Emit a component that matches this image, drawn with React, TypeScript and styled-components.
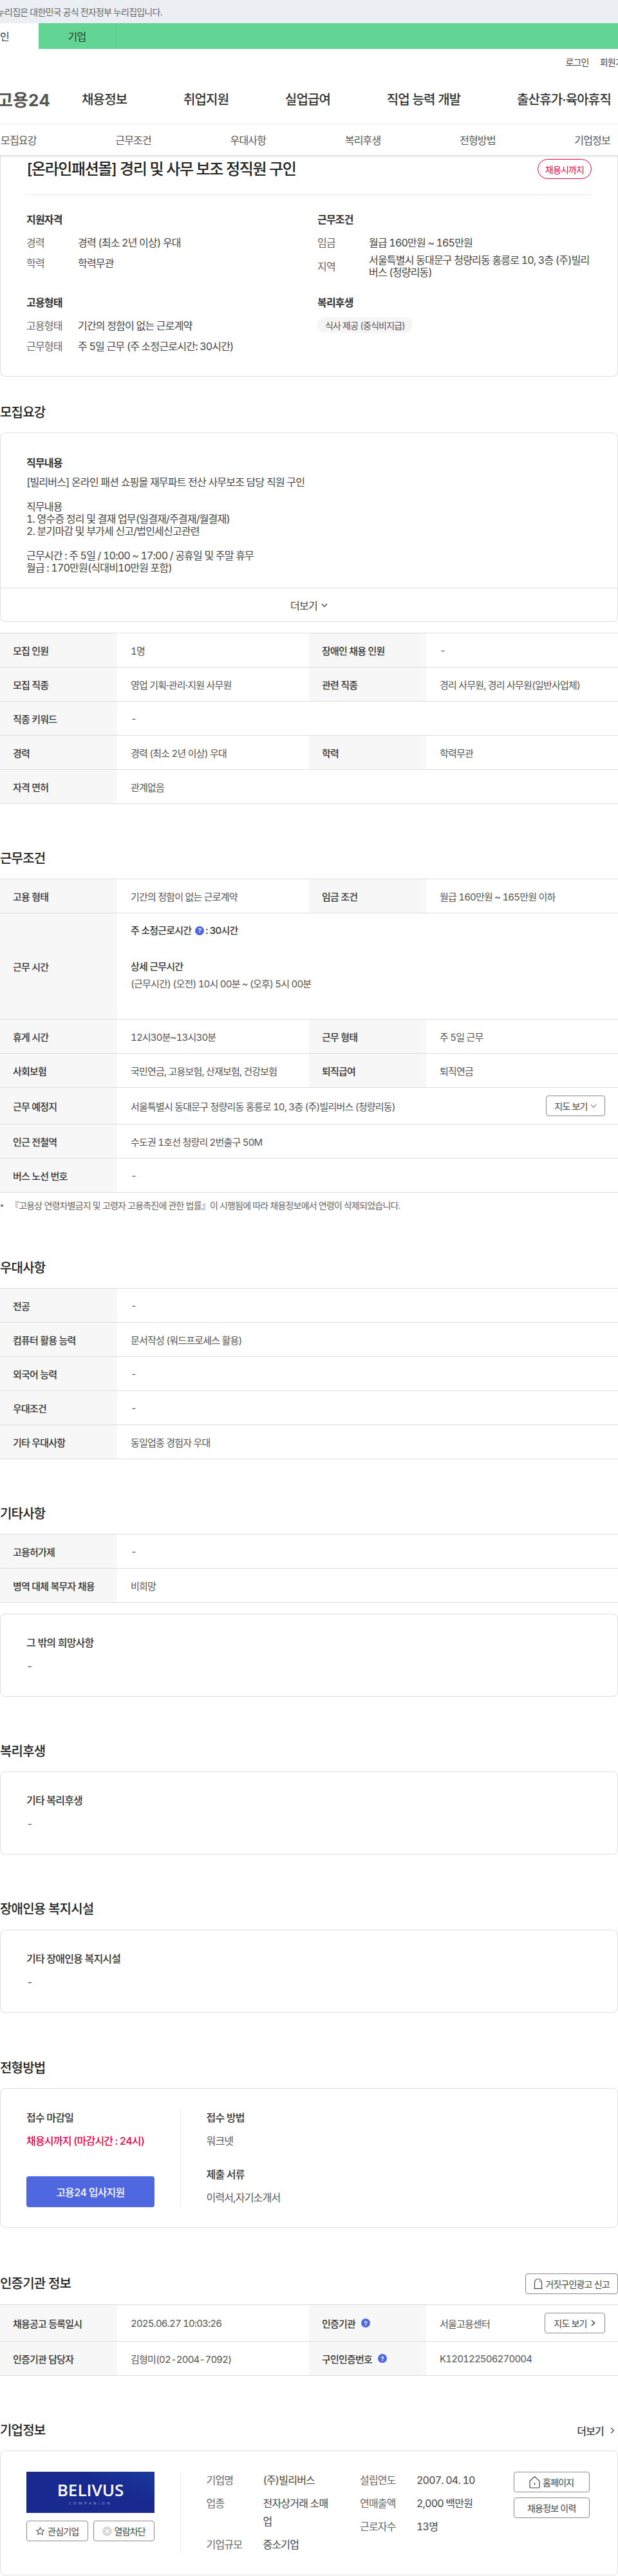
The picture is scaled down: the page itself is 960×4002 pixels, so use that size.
import React from "react";
import styled, { createGlobalStyle } from "styled-components";

const Global = createGlobalStyle`
  html, body { margin: 0; padding: 0; background: #fff; }
  body {
    font-family: Inter, "Noto Sans CJK KR", "Noto Sans", sans-serif;
    font-variant-numeric: tabular-nums;
    color: #333;
    letter-spacing: -0.05em;
    overflow-x: hidden;
  }
  * { box-sizing: border-box; }
`;

const Page = styled.div`
  width: 960px;
  overflow: hidden;
`;

const GovBar = styled.div`
  height: 36px;
  background: #ebeff4;
  display: flex;
  align-items: center;
  font-size: 14px;
  color: #666;
  white-space: nowrap;
`;
const GovText = styled.span`
  margin-left: -20px;
`;

const Audience = styled.div`
  height: 40px;
  background: #62d594;
  display: flex;
`;
const AudienceTab = styled.div<{ $active?: boolean }>`
  flex: none;
  width: 120px;
  margin-left: ${(p) => (p.$active ? "-60px" : "0")};
  background: ${(p) => (p.$active ? "#fff" : "transparent")};
  border-right: ${(p) => (p.$active ? "none" : "1px solid #5bcb8b")};
  display: flex;
  align-items: center;
  justify-content: center;
  font-size: 16px;
  color: #333;
`;

const Util = styled.div`
  height: 40px;
  display: flex;
  justify-content: flex-end;
  align-items: center;
  gap: 17px;
  margin-right: -20px;
  font-size: 14px;
  color: #444;
  white-space: nowrap;
`;

const MainNav = styled.div`
  height: 77px;
  display: flex;
  align-items: center;
  border-bottom: 1px solid #ececec;
  gap: 87.5px;
  font-size: 20px;
  font-weight: 500;
  color: #333;
  white-space: nowrap;
  padding-bottom: 1px;
`;
const Logo = styled.div`
  flex: none;
  width: 79px;
  margin-left: -4px;
  margin-right: -35.5px;
  font-size: 26px;
  font-weight: 700;
  color: #555;
  letter-spacing: 0;
`;

const Tabs = styled.div`
  position: relative;
  z-index: 2;
  height: 48px;
  display: flex;
  justify-content: space-between;
  align-items: center;
  padding: 0 12px 0 1px;
  background: #fff;
  font-size: 16px;
  color: #555;
  box-shadow: 0 2px 3px rgba(0, 0, 0, 0.14);
`;

const Card = styled.div<{ $noTop?: boolean }>`
  width: 960px;
  border: 1px solid #dedede;
  border-top: ${(p) => (p.$noTop ? "none" : "1px solid #dedede")};
  border-radius: ${(p) => (p.$noTop ? "0 0 8px 8px" : "8px")};
  background: #fff;
`;

const TitleRow = styled.div`
  margin: 0 40px;
  padding: 6px 0 24px;
  display: flex;
  justify-content: space-between;
  align-items: center;
  border-bottom: 1px solid #eaeaea;
`;
const Title = styled.h1`
  margin: 0;
  font-size: 24px;
  font-weight: 500;
  line-height: 31px;
  letter-spacing: -1.4px;
  color: #222;
`;
const Badge = styled.span`
  height: 31px;
  width: 84px;
  border: 1px solid #e6004d;
  border-radius: 16px;
  display: flex;
  align-items: center;
  justify-content: center;
  font-size: 14px;
  color: #e6004d;
`;

const Summary = styled.div`
  padding: 26px 40px 34px;
  display: grid;
  grid-template-columns: 452px 1fr;
  row-gap: 25px;
`;
const SumBlock = styled.div``;
const SumTitle = styled.div`
  font-size: 16px;
  line-height: 24px;
  font-weight: 600;
  color: #333;
  margin-bottom: 12px;
`;
const SumRow = styled.div<{ $mt?: number }>`
  display: grid;
  grid-template-columns: 80px 1fr;
  align-items: center;
  min-height: 24px;
  margin-top: ${(p) => p.$mt ?? 8}px;
  font-size: 16px;
  line-height: 19px;
`;
const SumLabel = styled.span`
  color: #666;
`;
const SumValue = styled.span`
  color: #444;
`;
const Pill = styled.span`
  display: inline-flex;
  align-items: center;
  height: 24px;
  padding: 0 12px;
  margin-top: -1px;
  border-radius: 12px;
  background: #f5f5f5;
  font-size: 14px;
  color: #555;
`;

const SectionHead = styled.div<{ $top?: number; $bottom?: number }>`
  margin-top: ${(p) => p.$top ?? 70}px;
  margin-bottom: ${(p) => p.$bottom ?? 16}px;
  min-height: 30px;
  display: flex;
  align-items: center;
  justify-content: space-between;
`;
const H2 = styled.h2`
  margin: 0;
  font-size: 20px;
  line-height: 30px;
  font-weight: 500;
  color: #222;
`;
const MoreLink = styled.span`
  display: flex;
  align-items: center;
  gap: 8px;
  margin-right: 4px;
  font-size: 16px;
  font-weight: 500;
  color: #444;
`;

const JobBody = styled.div`
  padding: 34px 40px 21px;
`;
const BoldHead = styled.div`
  font-size: 16px;
  line-height: 24px;
  font-weight: 600;
  color: #333;
`;
const Desc = styled.div`
  margin-top: 9px;
  font-size: 16px;
  line-height: 19px;
  color: #444;
  white-space: pre-line;
`;
const MoreBar = styled.div`
  height: 52px;
  border-top: 1px solid #dedede;
  display: flex;
  align-items: center;
  justify-content: center;
  gap: 6px;
  font-size: 16px;
  color: #444;
`;

const Table = styled.div<{ $top?: number }>`
  margin-top: ${(p) => p.$top ?? 0}px;
  border-top: 1px solid #dedede;
`;
const Row = styled.div<{ $h?: number }>`
  display: grid;
  grid-template-columns: 182px 298px 182px 1fr;
  min-height: ${(p) => p.$h ?? 53}px;
  border-bottom: 1px solid #dedede;
  font-size: 15px;
`;
const Label = styled.div`
  background: #f7f7f7;
  padding-left: 20px;
  display: flex;
  align-items: center;
  gap: 5px;
  font-weight: 500;
  color: #333;
`;
const Value = styled.div<{ $span?: boolean }>`
  grid-column: ${(p) => (p.$span ? "2 / -1" : "auto")};
  padding: 0 20px 0 21px;
  display: flex;
  align-items: center;
  justify-content: space-between;
  color: #555;
`;
const HoursCell = styled.div`
  grid-column: 2 / -1;
  padding: 13px 21px 0;
  color: #555;
  line-height: 27px;
`;
const HoursStrong = styled.div<{ $mt?: number }>`
  display: flex;
  align-items: center;
  gap: 2px;
  margin-top: ${(p) => p.$mt ?? 0}px;
  font-weight: 500;
  color: #333;
`;
const HoursText = styled.div``;

const Help = styled.span`
  flex: none;
  width: 14px;
  height: 14px;
  border-radius: 50%;
  background: #4f68e0;
  color: #fff;
  font-size: 9px;
  font-weight: 700;
  letter-spacing: 0;
  display: inline-flex;
  align-items: center;
  justify-content: center;
  margin: 0 0 0 4px;
`;

const OutlineBtn = styled.span<{ $w?: number }>`
  flex: none;
  width: ${(p) => p.$w ?? 92}px;
  height: 32px;
  border: 1px solid #8a8a8a;
  border-radius: 4px;
  background: #fff;
  display: inline-flex;
  align-items: center;
  justify-content: center;
  gap: 4px;
  font-size: 14px;
  color: #444;
  white-space: nowrap;
`;

const Note = styled.div`
  margin-top: 10px;
  height: 20px;
  display: flex;
  align-items: center;
  gap: 11px;
  padding-left: 1px;
  font-size: 14px;
  line-height: 20px;
  color: #666;
`;
const Dot = styled.span`
  width: 4px;
  height: 4px;
  border-radius: 50%;
  background: #777;
`;

const PlainCard = styled(Card)<{ $mt?: number }>`
  margin-top: ${(p) => p.$mt ?? 0}px;
  padding: 32px 40px 35px;
`;
const PlainHead = styled.div`
  font-size: 16px;
  line-height: 24px;
  font-weight: 500;
  color: #333;
`;
const PlainText = styled.div`
  margin-top: 12px;
  font-size: 16px;
  line-height: 24px;
  color: #555;
`;

const ApplyCard = styled(Card)`
  padding: 32px 40px 31px;
  display: flex;
`;
const ApplyLeft = styled.div`
  width: 239.5px;
  padding-right: 40px;
  border-right: 1px solid #eaeaea;
  height: 152px;
  display: flex;
  flex-direction: column;
`;
const ApplyRight = styled.div`
  padding-left: 40px;
`;
const ApplyHead = styled.div<{ $mt?: number }>`
  margin-top: ${(p) => p.$mt ?? 0}px;
  font-size: 16px;
  line-height: 26px;
  font-weight: 500;
  color: #333;
`;
const ApplyText = styled.div<{ $red?: boolean }>`
  margin-top: 10px;
  font-size: 16px;
  line-height: 26px;
  font-weight: ${(p) => (p.$red ? 500 : 400)};
  color: ${(p) => (p.$red ? "#e6004d" : "#555")};
`;
const ApplyButton = styled.div`
  margin-top: auto;
  height: 48px;
  border-radius: 4px;
  background: #4f68e0;
  color: #fff;
  font-size: 16px;
  font-weight: 500;
  display: flex;
  align-items: center;
  justify-content: center;
`;

const CompanyCard = styled(Card)`
  padding: 32px 40px;
  display: flex;
`;
const CompanyLeft = styled.div`
  width: 239.5px;
  height: 128px;
  padding-right: 40px;
  border-right: 1px solid #eaeaea;
`;
const CompanyLogo = styled.div`
  width: 199px;
  height: 64px;
  background: linear-gradient(200deg, #1a3a9e 0%, #182a90 35%, #172a90 100%);
  display: flex;
  flex-direction: column;
  align-items: center;
  justify-content: center;
  color: #fff;
  font-family: "Open Sans", sans-serif;
  letter-spacing: 0;
`;
const LogoName = styled.span`
  font-size: 26px;
  line-height: 28px;
  font-weight: 600;
  margin-top: 2px;
`;
const LogoSub = styled.span`
  font-size: 6px;
  line-height: 8px;
  letter-spacing: 3.4px;
  color: #a3aede;
  margin-top: 3px;
`;
const CompanyActions = styled.div`
  margin-top: 12px;
  display: flex;
  justify-content: space-between;
`;
const CompanyInfo = styled.div`
  flex: 1;
  padding-left: 40px;
  display: flex;
`;
const InfoCol = styled.div`
  width: 238.5px;
  display: flex;
  flex-direction: column;
  gap: 8px;
  margin-top: -1px;
`;
const InfoRow = styled.div`
  display: grid;
  grid-template-columns: 88px 108px;
  font-size: 16px;
  line-height: 28px;
`;
const InfoLabel = styled.span`
  color: #666;
`;
const InfoValue = styled.span`
  color: #444;
`;
const CompanyButtons = styled.div`
  width: 118.5px;
  display: flex;
  flex-direction: column;
  gap: 8px;
`;

const Chevron = ({ dir = "down", size = 10, w = 1.4 }: { dir?: "down" | "right"; size?: number; w?: number }) => (
  <svg width={size} height={size} viewBox="0 0 10 10" fill="none" stroke="#444" strokeWidth={w}>
    {dir === "down" ? <polyline points="1,3 5,7.5 9,3" /> : <polyline points="3,1 7.5,5 3,9" />}
  </svg>
);
const HouseIcon = () => (
  <svg width="17" height="20" viewBox="0 0 17 20" fill="none" stroke="#444" strokeWidth="1.2">
    <path d="M1 8.5 L8.5 1.5 L16 8.5 V18 Q16 19 15 19 H2 Q1 19 1 18 Z" />
    <path d="M8.5 11 V15" />
  </svg>
);
const DomeIcon = () => (
  <svg width="14" height="18" viewBox="0 0 14 18" fill="none" stroke="#444" strokeWidth="1.2">
    <path d="M1.5 16 V7 A5.5 5.5 0 0 1 12.5 7 V16" />
    <path d="M0.5 16.5 H13.5" />
    <path d="M9 4.5 L10 6" />
  </svg>
);
const StarIcon = () => (
  <svg width="15" height="17" viewBox="0 0 24 24" fill="none" stroke="#555" strokeWidth="1.8" strokeLinejoin="round">
    <path d="M12 2.5l2.9 6.2 6.6.9-4.8 4.7 1.2 6.7L12 17l-5.9 3 1.2-6.7L2.5 9.6l6.6-.9z" />
  </svg>
);
const BlockIcon = () => (
  <svg width="15" height="15" viewBox="0 0 15 15">
    <circle cx="7.5" cy="7.5" r="7.5" fill="#d9d9d9" />
    <path d="M4.7 4.7l5.6 5.6M10.3 4.7l-5.6 5.6" stroke="#fff" strokeWidth="1.4" />
  </svg>
);

type Cell = [string, string];
const Pair = ({ a, b }: { a: Cell; b?: Cell }) => (
  <Row>
    <Label>{a[0]}</Label>
    <Value $span={!b}>{a[1]}</Value>
    {b && <Label>{b[0]}</Label>}
    {b && <Value>{b[1]}</Value>}
  </Row>
);

const navItems = ["채용정보", "취업지원", "실업급여", "직업 능력 개발", "출산휴가·육아휴직"];
const tabItems = ["모집요강", "근무조건", "우대사항", "복리후생", "전형방법", "기업정보"];

export default function App() {
  return (
    <Page>
      <Global />
      <GovBar>
        <GovText>이 누리집은 대한민국 공식 전자정부 누리집입니다.</GovText>
      </GovBar>
      <Audience>
        <AudienceTab $active>개인</AudienceTab>
        <AudienceTab>기업</AudienceTab>
      </Audience>
      <Util>
        <span>로그인</span>
        <span>회원가입</span>
      </Util>
      <MainNav>
        <Logo>고용24</Logo>
        {navItems.map((n) => (
          <span key={n}>{n}</span>
        ))}
      </MainNav>
      <Tabs>
        {tabItems.map((t) => (
          <span key={t}>{t}</span>
        ))}
      </Tabs>

      <Card $noTop>
        <TitleRow>
          <Title>[온라인패션몰] 경리 및 사무 보조 정직원 구인</Title>
          <Badge>채용시까지</Badge>
        </TitleRow>
        <Summary>
          <SumBlock>
            <SumTitle>지원자격</SumTitle>
            <SumRow $mt={0}>
              <SumLabel>경력</SumLabel>
              <SumValue>경력 (최소 2년 이상) 우대</SumValue>
            </SumRow>
            <SumRow>
              <SumLabel>학력</SumLabel>
              <SumValue>학력무관</SumValue>
            </SumRow>
          </SumBlock>
          <SumBlock>
            <SumTitle>근무조건</SumTitle>
            <SumRow $mt={0}>
              <SumLabel>임금</SumLabel>
              <SumValue>월급 160만원 ~ 165만원</SumValue>
            </SumRow>
            <SumRow $mt={6}>
              <SumLabel>지역</SumLabel>
              <SumValue>서울특별시 동대문구 청량리동 홍릉로 10, 3층 (주)빌리버스 (청량리동)</SumValue>
            </SumRow>
          </SumBlock>
          <SumBlock>
            <SumTitle>고용형태</SumTitle>
            <SumRow $mt={0}>
              <SumLabel>고용형태</SumLabel>
              <SumValue>기간의 정함이 없는 근로계약</SumValue>
            </SumRow>
            <SumRow>
              <SumLabel>근무형태</SumLabel>
              <SumValue>주 5일 근무 (주 소정근로시간: 30시간)</SumValue>
            </SumRow>
          </SumBlock>
          <SumBlock>
            <SumTitle>복리후생</SumTitle>
            <Pill>식사 제공 (중식비지급)</Pill>
          </SumBlock>
        </Summary>
      </Card>

      <SectionHead $top={41}>
        <H2>모집요강</H2>
      </SectionHead>
      <Card>
        <JobBody>
          <BoldHead>직무내용</BoldHead>
          <Desc>
            {`[빌리버스] 온라인 패션 쇼핑몰 재무파트 전산 사무보조 담당 직원 구인

직무내용
1. 영수증 정리 및 결재 업무(일결재/주결재/월결재)
2. 분기마감 및 부가세 신고/법인세신고관련

근무시간 : 주 5일  / 10:00 ~ 17:00 /  공휴일 및 주말 휴무
월급 : 170만원(식대비10만원 포함)`}
          </Desc>
        </JobBody>
        <MoreBar>
          더보기 <Chevron size={10} />
        </MoreBar>
      </Card>

      <Table $top={17}>
        <Pair a={["모집 인원", "1명"]} b={["장애인 채용 인원", "-"]} />
        <Pair a={["모집 직종", "영업 기획·관리·지원 사무원"]} b={["관련 직종", "경리 사무원, 경리 사무원(일반사업체)"]} />
        <Pair a={["직종 키워드", "-"]} />
        <Pair a={["경력", "경력 (최소 2년 이상) 우대"]} b={["학력", "학력무관"]} />
        <Pair a={["자격 면허", "관계없음"]} />
      </Table>

      <SectionHead>
        <H2>근무조건</H2>
      </SectionHead>
      <Table>
        <Pair a={["고용 형태", "기간의 정함이 없는 근로계약"]} b={["임금 조건", "월급 160만원 ~ 165만원 이하"]} />
        <Row $h={165}>
          <Label>근무 시간</Label>
          <HoursCell>
            <HoursStrong>
              주 소정근로시간<Help>?</Help>: 30시간
            </HoursStrong>
            <HoursStrong $mt={29}>상세 근무시간</HoursStrong>
            <HoursText>(근무시간) (오전) 10시 00분 ~ (오후) 5시 00분</HoursText>
          </HoursCell>
        </Row>
        <Pair a={["휴게 시간", "12시30분~13시30분"]} b={["근무 형태", "주 5일 근무"]} />
        <Pair a={["사회보험", "국민연금, 고용보험, 산재보험, 건강보험"]} b={["퇴직급여", "퇴직연금"]} />
        <Row $h={57}>
          <Label>근무 예정지</Label>
          <Value $span>
            서울특별시 동대문구 청량리동 홍릉로 10, 3층 (주)빌리버스 (청량리동)
            <OutlineBtn $w={92}>
              지도 보기 <Chevron size={10} w={1} />
            </OutlineBtn>
          </Value>
        </Row>
        <Pair a={["인근 전철역", "수도권 1호선 청량리 2번출구 50M"]} />
        <Pair a={["버스 노선 번호", "-"]} />
      </Table>
      <Note>
        <Dot />
        『고용상 연령차별금지 및 고령자 고용촉진에 관한 법률』이 시행됨에 따라 채용정보에서 연령이 삭제되었습니다.
      </Note>

      <SectionHead $top={72}>
        <H2>우대사항</H2>
      </SectionHead>
      <Table>
        <Pair a={["전공", "-"]} />
        <Pair a={["컴퓨터 활용 능력", "문서작성 (워드프로세스 활용)"]} />
        <Pair a={["외국어 능력", "-"]} />
        <Pair a={["우대조건", "-"]} />
        <Pair a={["기타 우대사항", "동일업종 경험자 우대"]} />
      </Table>

      <SectionHead>
        <H2>기타사항</H2>
      </SectionHead>
      <Table>
        <Pair a={["고용허가제", "-"]} />
        <Pair a={["병역 대체 복무자 채용", "비희망"]} />
      </Table>
      <PlainCard $mt={17}>
        <PlainHead>그 밖의 희망사항</PlainHead>
        <PlainText>-</PlainText>
      </PlainCard>

      <SectionHead>
        <H2>복리후생</H2>
      </SectionHead>
      <PlainCard>
        <PlainHead>기타 복리후생</PlainHead>
        <PlainText>-</PlainText>
      </PlainCard>

      <SectionHead $bottom={17}>
        <H2>장애인용 복지시설</H2>
      </SectionHead>
      <PlainCard>
        <PlainHead>기타 장애인용 복지시설</PlainHead>
        <PlainText>-</PlainText>
      </PlainCard>

      <SectionHead $top={71}>
        <H2>전형방법</H2>
      </SectionHead>
      <ApplyCard>
        <ApplyLeft>
          <ApplyHead>접수 마감일</ApplyHead>
          <ApplyText $red>채용시까지 (마감시간 : 24시)</ApplyText>
          <ApplyButton>고용24 입사지원</ApplyButton>
        </ApplyLeft>
        <ApplyRight>
          <ApplyHead>접수 방법</ApplyHead>
          <ApplyText>워크넷</ApplyText>
          <ApplyHead $mt={26}>제출 서류</ApplyHead>
          <ApplyText>이력서,자기소개서</ApplyText>
        </ApplyRight>
      </ApplyCard>

      <SectionHead $top={71}>
        <H2>인증기관 정보</H2>
        <OutlineBtn $w={144}>
          <DomeIcon />
          거짓구인광고 신고
        </OutlineBtn>
      </SectionHead>
      <Table>
        <Row $h={57}>
          <Label>채용공고 등록일시</Label>
          <Value>2025.06.27 10:03:26</Value>
          <Label>
            인증기관<Help>?</Help>
          </Label>
          <Value>
            서울고용센터
            <OutlineBtn $w={94}>
              지도 보기 <Chevron dir="right" size={10} w={1.6} />
            </OutlineBtn>
          </Value>
        </Row>
        <Row>
          <Label>인증기관 담당자</Label>
          <Value>김형미(02-2004-7092)</Value>
          <Label>
            구인인증번호<Help>?</Help>
          </Label>
          <Value>K120122506270004</Value>
        </Row>
      </Table>

      <SectionHead>
        <H2>기업정보</H2>
        <MoreLink>
          더보기 <Chevron dir="right" size={10} w={1.2} />
        </MoreLink>
      </SectionHead>
      <CompanyCard>
        <CompanyLeft>
          <CompanyLogo>
            <LogoName>BELIVUS</LogoName>
            <LogoSub>COMPANION</LogoSub>
          </CompanyLogo>
          <CompanyActions>
            <OutlineBtn $w={95.5}>
              <StarIcon />
              관심기업
            </OutlineBtn>
            <OutlineBtn $w={94.5}>
              <BlockIcon />
              열람차단
            </OutlineBtn>
          </CompanyActions>
        </CompanyLeft>
        <CompanyInfo>
          <InfoCol>
            <InfoRow>
              <InfoLabel>기업명</InfoLabel>
              <InfoValue>(주)빌리버스</InfoValue>
            </InfoRow>
            <InfoRow>
              <InfoLabel>업종</InfoLabel>
              <InfoValue>전자상거래 소매업</InfoValue>
            </InfoRow>
            <InfoRow>
              <InfoLabel>기업규모</InfoLabel>
              <InfoValue>중소기업</InfoValue>
            </InfoRow>
          </InfoCol>
          <InfoCol>
            <InfoRow>
              <InfoLabel>설립연도</InfoLabel>
              <InfoValue>2007. 04. 10</InfoValue>
            </InfoRow>
            <InfoRow>
              <InfoLabel>연매출액</InfoLabel>
              <InfoValue>2,000 백만원</InfoValue>
            </InfoRow>
            <InfoRow>
              <InfoLabel>근로자수</InfoLabel>
              <InfoValue>13명</InfoValue>
            </InfoRow>
          </InfoCol>
          <CompanyButtons>
            <OutlineBtn $w={118.5}>
              <HouseIcon />
              홈페이지
            </OutlineBtn>
            <OutlineBtn $w={118.5}>채용정보 이력</OutlineBtn>
          </CompanyButtons>
        </CompanyInfo>
      </CompanyCard>
    </Page>
  );
}
